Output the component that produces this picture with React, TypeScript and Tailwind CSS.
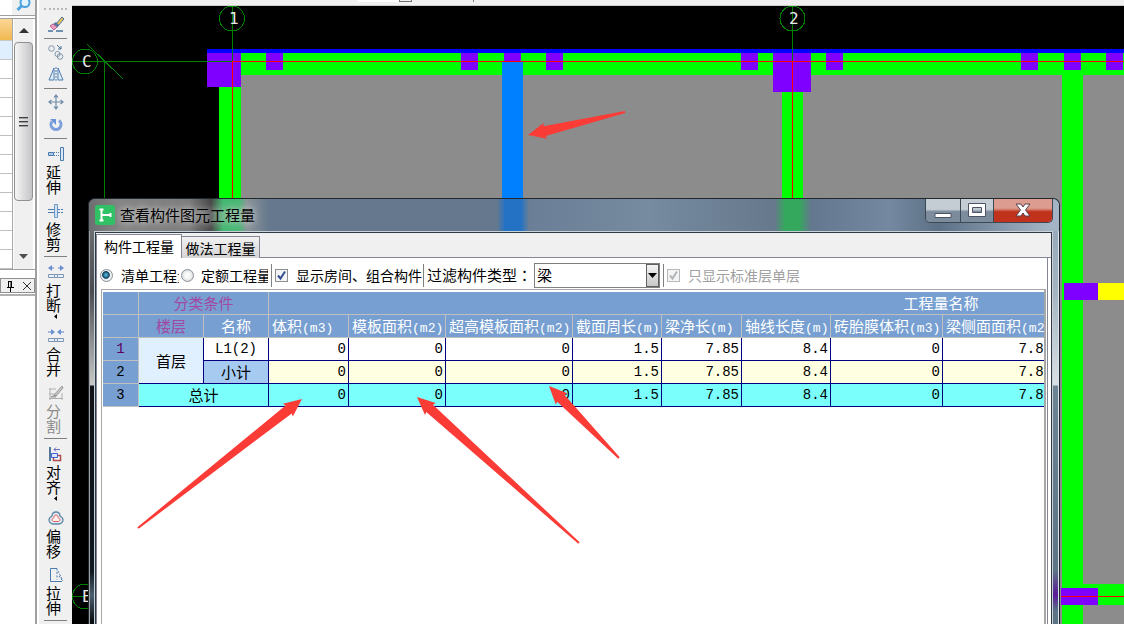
import type { ReactNode } from 'react';
import { clsx } from 'clsx';

interface ToolItem {
  label: string;
  icon: ReactNode;
  hasMenu?: boolean;
  disabled?: boolean;
}

interface Column {
  name: string;
  unit: string;
}

const columns: Column[] = [
  { name: '体积', unit: '(m3)' },
  { name: '模板面积', unit: '(m2)' },
  { name: '超高模板面积', unit: '(m2)' },
  { name: '截面周长', unit: '(m)' },
  { name: '梁净长', unit: '(m)' },
  { name: '轴线长度', unit: '(m)' },
  { name: '砖胎膜体积', unit: '(m3)' },
  { name: '梁侧面面积', unit: '(m2)' },
];

const quantities = ['0', '0', '0', '1.5', '7.85', '8.4', '0', '7.85'];

function Icon({ children }: { children: ReactNode }) {
  return (
    <svg className="block size-4 shrink-0" viewBox="0 0 16 16" fill="none" aria-hidden="true">
      {children}
    </svg>
  );
}

const eraserIcon = (
  <Icon>
    <path d="M8 8 14 1l2 2-6 7z" fill="#f0c060" stroke="#4a7090" />
    <path d="m5 8 3-2 3 3-2 3z" fill="#4f789c" />
    <path d="m2 10 3-2 4 3-3 3z" fill="#f0a0c0" stroke="#b06090" />
    <path d="M0 15h5M8 15h7" stroke="#44749a" strokeWidth="1.5" />
  </Icon>
);

const copyIcon = (
  <Icon>
    <circle cx="3.5" cy="4.5" r="2.8" stroke="#7f96ab" />
    <path d="m9 1 4 4m0-3v3h-3" stroke="#44749a" />
    <circle cx="9.5" cy="10" r="2.6" stroke="#7f96ab" />
    <circle cx="12" cy="12.5" r="2.8" stroke="#7f96ab" />
  </Icon>
);

const mirrorIcon = (
  <Icon>
    <path d="M6 2v12H1zM10 2v12h5z" fill="#e4eefa" stroke="#4b7cae" />
    <path d="M8 1v14" stroke="#4b7cae" strokeDasharray="2 1" />
  </Icon>
);

const moveIcon = (
  <Icon>
    <path
      d="M8 2v12M2 8h12M6 3.5 8 1l2 2.5M6 12.5 8 15l2-2.5M3.5 6 1 8l2.5 2M12.5 6 15 8l-2.5 2"
      stroke="#6f8ca8"
      strokeWidth="1.2"
    />
  </Icon>
);

const rotateIcon = (
  <Icon>
    <path d="M11 4.5A5 5 0 1 1 4 5.5" stroke="#7c9fdc" strokeWidth="3" />
    <path d="M2 3h6v6z" fill="#6a94d8" />
  </Icon>
);

const extendIcon = (
  <Icon>
    <path d="M.5 6.5h5v3h-5z" fill="#a9c8ea" stroke="#4b7cae" />
    <path d="M6 6.5h5M6 9.5h5" stroke="#4b7cae" strokeDasharray="1 1" />
    <path d="M12.5 1.5h3v13h-3z" fill="#dce8f5" stroke="#4b7cae" />
  </Icon>
);

const trimIcon = (
  <Icon>
    <path d="M0 6.5h6M0 9.5h6" stroke="#4b7cae" />
    <path d="M10 6.5h6M10 9.5h6" stroke="#4b7cae" strokeDasharray="2 1" />
    <path d="M6.5 1.5h3v13h-3z" fill="#cfe0f2" stroke="#6c9ac8" />
  </Icon>
);

const breakIcon = (
  <Icon>
    <path d="M1 4h5M10 4h5" stroke="#5a82cc" />
    <path d="M4 1 0 4l4 3zM12 1l4 3-4 3z" fill="#6a90d4" />
    <path d="M.5 10.5h6v3h-6zM9.5 10.5h6v3h-6zM6.5 10.5h3v3h-3z" fill="#e8f0f8" stroke="#7f96b8" />
  </Icon>
);

const mergeIcon = (
  <Icon>
    <path d="M0 4h4M12 4h4" stroke="#5a82cc" />
    <path d="m3 1 4 3-4 3zM13 1 9 4l4 3z" fill="#6a90d4" />
    <path d="M.5 10.5h15v3H.5zM6.5 10.5v3M9.5 10.5v3" fill="#e8f0f8" stroke="#7f96b8" />
  </Icon>
);

const splitIcon = (
  <Icon>
    <path d="M1 4h7M1 13.5h14M2 3v12M14 8v7M1 9h5" stroke="#b0b0b0" />
    <path d="m6 10 8-9 1 2-7 8zM3 12l4-2 1 2z" fill="#c8c8c8" stroke="#989898" />
  </Icon>
);

const alignIcon = (
  <Icon>
    <path d="M2 1v14" stroke="#4f789c" strokeWidth="2" />
    <path d="M6 3.5h6M8 1.5l-2 2 2 2" stroke="#6a6cc0" />
    <path d="M5.5 9.5h7v5h-7z" fill="#fff" stroke="#b04848" strokeWidth="1.5" />
    <path d="M3.5 7.5h6v4h-6z" fill="#dce8ff" stroke="#3c64d8" />
  </Icon>
);

const offsetIcon = (
  <Icon>
    <path d="M8 2c3 0 4 2 4 4 2 1 3 2 3 4s-2 4-4 4H5c-2 0-4-2-4-4s1-3 3-4c0-2 1-4 4-4z" fill="#e0e8f0" stroke="#5f88a4" strokeWidth="1.3" />
    <path d="M8 5c1.5 0 2 1 2 2.5 1 .5 2 1 2 2s-1 2-2 2H6c-1 0-2-1-2-2s1-1.5 2-2C6 6 6.5 5 8 5z" fill="#fbeeee" stroke="#e06060" />
  </Icon>
);

const stretchIcon = (
  <Icon>
    <path d="M9 1.5H2.5v13H14" stroke="#4b7cae" />
    <path d="M9 1.5v11M10 4l5 10M11 9l3 4" stroke="#4b7cae" strokeDasharray="2 1.5" />
  </Icon>
);

const iconGroups = [
  [
    { label: '复制', icon: copyIcon },
    { label: '镜像', icon: mirrorIcon },
  ],
  [
    { label: '移动', icon: moveIcon },
    { label: '旋转', icon: rotateIcon },
  ],
];

const toolGroups: ToolItem[][] = [
  [
    { label: '延伸', icon: extendIcon },
    { label: '修剪', icon: trimIcon },
  ],
  [
    { label: '打断', icon: breakIcon, hasMenu: true },
    { label: '合并', icon: mergeIcon },
    { label: '分割', icon: splitIcon, disabled: true },
  ],
  [
    { label: '对齐', icon: alignIcon, hasMenu: true },
    { label: '偏移', icon: offsetIcon },
    { label: '拉伸', icon: stretchIcon },
  ],
];

function ToolButton({ label, icon, hasMenu, disabled }: ToolItem) {
  return (
    <button
      type="button"
      disabled={disabled}
      className={clsx('flex flex-col items-center', disabled ? 'text-[#8a8a8a]' : 'text-black')}
    >
      {icon}
      <span className="mt-0.5 mr-1 mb-px w-4 text-[15px] leading-[15px] break-all">{label}</span>
      {hasMenu && (
        <svg className="block h-[7px] w-2" viewBox="0 0 8 7" aria-hidden="true">
          <path d="M5 1v5L2 3.5z" fill="#000" />
        </svg>
      )}
    </button>
  );
}

function ModifyToolbar() {
  return (
    <nav className="flex w-[35px] shrink-0 flex-col border-l-2 border-white bg-[#f0f0f0] px-[5px]">
      <div className="mt-2 mb-1.5 h-0.5 shrink-0 border-t-2 border-dotted border-[#b8b8b8]" />
      <div className="flex justify-center pb-1.5">
        <button type="button" aria-label="删除">{eraserIcon}</button>
      </div>
      {iconGroups.map((group) => (
        <div key={group[0].label} className="flex flex-col items-center gap-1.5 border-t border-[#808080] pt-[5px] pb-1.5">
          {group.map((tool) => (
            <button key={tool.label} type="button" aria-label={tool.label}>{tool.icon}</button>
          ))}
        </div>
      ))}
      {toolGroups.map((group) => (
        <div key={group[0].label} className="flex flex-col items-center gap-2 border-t border-[#808080] pt-[7px] pb-1">
          {group.map((tool) => (
            <ToolButton key={tool.label} {...tool} />
          ))}
        </div>
      ))}
      <div className="border-t border-[#808080]" />
    </nav>
  );
}

function LeftPanel() {
  return (
    <aside className="flex w-[37px] shrink-0 flex-col border-r-2 border-[#a0a0a0] bg-white">
      <div className="flex h-4 shrink-0 items-start justify-between border-b border-[#a0a0a0] bg-[#f0f0f0]">
        <div className="h-full w-3 bg-white" />
        <svg className="block h-3 w-5" viewBox="0 0 20 12" fill="none" aria-hidden="true">
          <circle cx="10" cy="2.5" r="4.5" fill="#e4f4ff" stroke="#4aa3e0" strokeWidth="2" />
          <path d="m6.5 6-4 4" stroke="#4aa3e0" strokeWidth="3" />
        </svg>
      </div>
      <div className="mt-0.5 flex h-[252px] shrink-0 overflow-hidden border-y border-[#a0a0a0]">
        <div className="w-[13px] shrink-0 border-r border-[#a8a8a8]">
          <div className="h-[22px] border-b border-[#c8c8c8] bg-linear-to-b from-[#fbd795] to-[#f0b850]" />
          <div className="h-[19px] border-b border-[#c8c8c8] bg-[#dfeffe]" />
          {Array.from({ length: 11 }, (_, i) => (
            <div key={i} className="h-[19px] border-b border-[#c0c0c0]" />
          ))}
        </div>
        <div className="ml-px flex w-[19px] flex-col items-center bg-[#f0f0f0]">
          <svg className="h-[23px] w-3 shrink-0" viewBox="0 0 12 23" aria-hidden="true">
            <path d="m6 9 5 5H1z" fill="#303030" />
          </svg>
          <div className="flex h-[159px] w-[19px] shrink-0 flex-col items-center justify-center gap-0.5 rounded-sm border border-[#909090] bg-linear-to-r from-[#f6f6f6] to-[#c4c4c8]">
            <div className="h-0.5 w-[9px] border-t border-[#404040] bg-[#a0a0a0]" />
            <div className="h-0.5 w-[9px] border-t border-[#404040] bg-[#a0a0a0]" />
            <div className="h-0.5 w-[9px] border-t border-[#404040] bg-[#a0a0a0]" />
          </div>
          <svg className="mt-auto mb-1.5 h-3 w-3 shrink-0" viewBox="0 0 12 12" aria-hidden="true">
            <path d="M1 3h9L5.5 8z" fill="#505050" />
          </svg>
        </div>
      </div>
      <div className="mt-2 flex h-[15px] shrink-0 items-center justify-end gap-2 border border-[#909090] bg-[#f0f0f0] pr-0.5">
        <button type="button" aria-label="固定">
          <svg className="block h-3 w-2" viewBox="0 0 8 12" fill="none" aria-hidden="true">
            <path d="M2 1.5h4M2.5 1v6M5.5 1v6M5 1v6M1 7.5h7M4.5 8v4" stroke="#000" />
          </svg>
        </button>
        <button type="button" aria-label="关闭面板">
          <svg className="block h-3 w-2.5" viewBox="0 0 10 12" fill="none" aria-hidden="true">
            <path d="m1 2 8 8M9 2l-8 8" stroke="#303030" />
          </svg>
        </button>
      </div>
      <div className="mt-px flex-1 border-t-2 border-[#b0b0b0]" />
    </aside>
  );
}

const studs = [266, 461, 546, 741, 826, 1021, 1064, 1106];

// Plan view of the floor: slabs, beams, columns and axis grid
function PlanDrawing() {
  return (
    <svg className="absolute inset-0 size-full" aria-hidden="true">
      <g transform="translate(-72 -6)" shapeRendering="crispEdges">
        <rect x="241" y="75" width="1600" height="1200" fill="#8c8c8c" />
        <rect x="219" y="87" width="22" height="1200" fill="#00ff00" />
        <rect x="241" y="53" width="1600" height="22" fill="#00ff00" />
        <rect x="782" y="75" width="21" height="1200" fill="#00ff00" />
        <rect x="1062" y="75" width="21" height="1200" fill="#00ff00" />
        <rect x="1083" y="584" width="800" height="21" fill="#00ff00" />
        <rect x="207" y="49" width="1600" height="4" fill="#0000ff" />
        <rect x="207" y="53" width="34" height="34" fill="#8000ff" />
        <rect x="773" y="53" width="38" height="39" fill="#8000ff" />
        <rect x="504" y="53" width="17" height="9" fill="#8000ff" />
        {studs.map((x) => (
          <rect key={x} x={x} y="53" width="17" height="17" fill="#8000ff" />
        ))}
        <rect x="502" y="62" width="21" height="400" fill="#0080ff" />
        <rect x="1064" y="283" width="34" height="17" fill="#8000ff" />
        <rect x="1098" y="283" width="400" height="17" fill="#ffff00" />
        <rect x="1061" y="588" width="37" height="17" fill="#8000ff" />
        <path d="M232 61.5h1400M232.5 61v400M792.5 61v400M1061 596.5h600" stroke="#ff0000" fill="none" />
        <path
          d="M72 61.5h160M232.5 6v55M792.5 6v55M104.5 61v400M87 44l36 35M72 596.5h12"
          stroke="#008000"
          fill="none"
        />
        <g stroke="#008000" fill="none">
          <circle cx="232" cy="18.5" r="12.5" />
          <circle cx="792.5" cy="18.5" r="12.5" />
          <circle cx="85" cy="61.5" r="12.5" />
          <circle cx="85" cy="596.5" r="12.5" />
        </g>
      </g>
      <g transform="translate(-72 -6)" className="fill-[#e8e8e8] font-['DejaVu_Sans_Mono',monospace] text-base">
        <text x="229" y="24">1</text>
        <text x="789" y="24">2</text>
        <text x="82" y="67">C</text>
        <text x="82" y="602">E</text>
      </g>
    </svg>
  );
}

const arrows = [
  { tip: [528, 135], tail: [625, 112] },
  { tip: [302, 399], tail: [138, 528] },
  { tip: [417, 397], tail: [579, 543] },
  { tip: [549, 386], tail: [619, 458] },
];

function Arrow({ tip, tail }: { tip: number[]; tail: number[] }) {
  const dx = tail[0] - tip[0];
  const dy = tail[1] - tip[1];
  const len = Math.hypot(dx, dy);
  const at = (along: number, side: number) =>
    `${tip[0] + (dx * along - dy * side) / len},${tip[1] + (dy * along + dx * side) / len}`;

  return (
    <polygon points={[at(0, 0), at(18, 8), at(17, 5), at(len, 1), at(len, -1), at(17, -5), at(18, -8)].join(' ')} />
  );
}

function Annotations() {
  return (
    <svg className="pointer-events-none absolute inset-0 size-full" aria-hidden="true">
      <g transform="translate(-72 -6)" fill="#fb3b36">
        {arrows.map((arrow) => (
          <Arrow key={arrow.tip[0]} {...arrow} />
        ))}
      </g>
    </svg>
  );
}

function TitleBar() {
  return (
    <header className="flex h-8 shrink-0 items-start justify-between bg-[linear-gradient(90deg,#6c6e6f_0,#858585_30px,#7c7c7c_100px,#484848_122px,#44b870_134px,#48b874_150px,#8a9498_158px,#66788e_180px,#66788e_408px,#2472c4_416px,#2472c4_432px,#6a7f95_440px,#768ba0_560px,#66788c_686px,#34a85c_696px,#34a85c_710px,#63778e_722px,#74899f_800px,#5c7086_850px,#a3b4c4_960px)] pl-1.5">
      <div className="flex items-center gap-[5px] pt-1.5">
        <svg className="block size-5 shrink-0" viewBox="0 0 20 20" fill="none" aria-hidden="true">
          <rect width="20" height="20" rx="3" fill="#2fc163" />
          <path d="M4.5 4.5h4M6.5 4.5v11M4.5 15.5h4M6.5 10h9M15.5 8v4" stroke="#fff" strokeWidth="2" />
        </svg>
        <h1 className="text-[15px] leading-5 whitespace-nowrap text-black [text-shadow:0_0_8px_#c8c8c8,0_0_6px_#c8c8c8]">
          查看构件图元工程量
        </h1>
      </div>
      <div className="mr-1.5 flex h-6 shrink-0 overflow-hidden rounded-b-[5px] border border-t-0 border-[#3c4854]">
        <button
          type="button"
          aria-label="最小化"
          className="flex w-[35px] items-center justify-center border-r border-[#3c4854] bg-linear-to-b from-[#c4ccd4] from-45% to-[#7c8c9c] to-55%"
        >
          <svg className="block h-5 w-5" viewBox="0 0 20 20" aria-hidden="true">
            <path d="M2 12.5h16v4H2z" fill="#fff" stroke="#4c5464" />
          </svg>
        </button>
        <button
          type="button"
          aria-label="最大化"
          className="flex w-[33px] items-center justify-center border-r border-[#3c4854] bg-linear-to-b from-[#c4ccd4] from-45% to-[#7c8c9c] to-55%"
        >
          <svg className="block h-5 w-5" viewBox="0 0 20 20" aria-hidden="true">
            <path d="M1.5 2.5h17v13h-17zM5.5 6.5v5h9v-5z" fill="#fff" stroke="#4c5464" fillRule="evenodd" />
          </svg>
        </button>
        <button
          type="button"
          aria-label="关闭"
          className="flex w-[58px] items-center justify-center bg-linear-to-b from-[#dc9c90] from-40% to-[#c0321c] to-55%"
        >
          <svg className="block h-5 w-5" viewBox="0 0 20 20" aria-hidden="true">
            <path d="M3 3h5l2 3 2-3h5l-4.5 6 4.5 6h-5l-2-3-2 3H3l4.5-6z" fill="#fff" stroke="#54404c" />
          </svg>
        </button>
      </div>
    </header>
  );
}

function Separator() {
  return <div className="h-[23px] w-px shrink-0 bg-[#808080]" />;
}

const radioClass =
  'size-[13px] shrink-0 appearance-none rounded-full border border-[#8a8f94] bg-[radial-gradient(circle,#fafafa_30%,#c8ccd0_100%)] checked:bg-[radial-gradient(circle_at_45%_45%,#58c8f0_0,#10405c_40%,#e8eef2_50%)]';

function CheckMark({ id, disabled }: { id: string; disabled?: boolean }) {
  return (
    <span className="relative flex size-[13px] shrink-0">
      <input
        id={id}
        type="checkbox"
        defaultChecked
        disabled={disabled}
        className="size-[13px] appearance-none border border-[#8e8f8f] bg-[#f2f4f6] disabled:border-[#b8b8b8]"
      />
      <svg className="pointer-events-none absolute inset-0 size-[13px]" viewBox="0 0 13 13" fill="none" aria-hidden="true">
        <path d="m3 6.5 2.5 3L10 2.5" stroke={disabled ? '#b4b4b4' : '#344f90'} strokeWidth="2" />
      </svg>
    </span>
  );
}

function FilterBar() {
  return (
    <div className="flex h-[31px] shrink-0 items-center pt-[3px] text-sm whitespace-nowrap text-black">
      <input id="list-qty" name="qty" type="radio" defaultChecked className={clsx(radioClass, 'ml-[3px]')} />
      <label htmlFor="list-qty" className="ml-2 w-[58px] shrink-0 overflow-hidden">清单工程量</label>
      <input id="quota-qty" name="qty" type="radio" className={clsx(radioClass, 'ml-0.5')} />
      <label htmlFor="quota-qty" className="mr-[3px] ml-[7px] w-[67px] shrink-0 overflow-hidden">定额工程量</label>
      <Separator />
      <div className="mr-px ml-[3px] flex shrink-0 items-center gap-2">
        <CheckMark id="show-rooms" />
        <label htmlFor="show-rooms" className="w-[126px]">显示房间、组合构件</label>
      </div>
      <Separator />
      <label htmlFor="member-type" className="ml-[3px] w-[107px] shrink-0 text-[15px]">
        过滤构件类型<span className="font-['Noto_Sans_CJK_TC',sans-serif]" lang="zh-Hant">：</span>
      </label>
      <div className="relative mr-[3px] flex h-[25px] w-[126px] shrink-0 border border-[#808080]">
        <select id="member-type" defaultValue="梁" className="w-full appearance-none bg-white pl-0.5 text-[15px] leading-5">
          <option>梁</option>
          <option>柱</option>
          <option>板</option>
        </select>
        <svg
          className="pointer-events-none absolute inset-y-0 right-0 h-full w-[13px] border border-[#606060] bg-linear-to-b from-[#f4f4f4] to-[#c8c8c8]"
          viewBox="0 0 11 21"
          aria-hidden="true"
        >
          <path d="M1 8h9l-4.5 5z" fill="#000" />
        </svg>
      </div>
      <Separator />
      <div className="ml-[3px] flex shrink-0 items-center gap-2 text-[#a0a0a0]">
        <CheckMark id="standard-only" disabled />
        <label htmlFor="standard-only">只显示标准层单层</label>
      </div>
    </div>
  );
}

const monoFont = "font-['Liberation_Mono','Noto_Sans_CJK_SC',monospace]";
const headCell = 'h-[23px] border-r border-b border-[#c0c0c0] bg-[#779fd1] font-normal overflow-hidden';
const bodyCell = 'h-[23px] border-r border-b border-[#000080] overflow-hidden';

function QuantityCells({ className }: { className: string }) {
  return (
    <>
      {quantities.map((value, i) => (
        <td key={columns[i].name} className={clsx(bodyCell, monoFont, 'pr-0.5 text-right text-sm leading-[22px]', className)}>
          {value}
        </td>
      ))}
      <td className={clsx(bodyCell, className)} />
    </>
  );
}

function QuantityTable() {
  return (
    <table className="w-[1511px] table-fixed border-separate border-spacing-0 text-[15px] leading-[22px] whitespace-nowrap text-black">
      <colgroup>
        <col className="w-9" />
        <col className="w-[65px]" />
        <col className="w-[65px]" />
        <col className="w-20" />
        <col className="w-[97px]" />
        <col className="w-[127px]" />
        <col className="w-[89px]" />
        <col className="w-20" />
        <col className="w-[89px]" />
        <col className="w-28" />
        <col className="w-28" />
        <col />
      </colgroup>
      <thead className="text-white">
        <tr>
          <th className={headCell} />
          <th colSpan={2} className={clsx(headCell, 'text-[#a349a4]')}>分类条件</th>
          <th colSpan={9} className={headCell}>工程量名称</th>
        </tr>
        <tr>
          <th className={headCell} />
          <th className={clsx(headCell, 'text-[#a349a4]')}>楼层</th>
          <th className={headCell}>名称</th>
          {columns.map((column) => (
            <th key={column.name} className={clsx(headCell, 'pl-[3px] text-left')}>
              {column.name}
              <span className={clsx(monoFont, 'text-[13px] leading-none')}>{column.unit}</span>
            </th>
          ))}
          <th className={headCell} />
        </tr>
      </thead>
      <tbody>
        <tr>
          <th className={clsx(headCell, monoFont, 'text-sm leading-[22px] text-[#5a0060]')}>1</th>
          <td rowSpan={2} className={clsx(bodyCell, 'bg-[#e0f0ff] text-center')}>首层</td>
          <td className={clsx(bodyCell, monoFont, 'bg-white text-center text-sm leading-[22px]')}>L1(2)</td>
          <QuantityCells className="bg-white" />
        </tr>
        <tr>
          <th className={clsx(headCell, monoFont, 'text-sm leading-[22px]')}>2</th>
          <td className={clsx(bodyCell, 'bg-[#a6caf0] text-center')}>小计</td>
          <QuantityCells className="bg-[#ffffe1]" />
        </tr>
        <tr>
          <th className={clsx(headCell, monoFont, 'text-sm leading-[22px]')}>3</th>
          <td colSpan={2} className={clsx(bodyCell, 'bg-[#7bfffd] text-center')}>总计</td>
          <QuantityCells className="bg-[#7bfffd]" />
        </tr>
      </tbody>
    </table>
  );
}

function QuantityDialog() {
  return (
    <section className="absolute top-48 right-16 bottom-0 left-4 flex flex-col overflow-hidden rounded-t-[7px] border border-b-0 border-[#20282e] bg-[#66788e]">
      <TitleBar />
      <div className="flex min-h-0 flex-1">
        <div className="w-[5px] shrink-0 border-l border-[#9aa0a4] bg-[linear-gradient(180deg,#6a6c6e_0,#484c50_60px,#c8c8c8_154px,#101418_155px,#101820_340px,#4c6070_364px,#0c1014_390px)]" />
        <div className="flex min-w-0 flex-1 flex-col border border-b-0 border-[#c8d0d8]">
          <div className="flex min-w-0 flex-1 flex-col border border-b-0 border-[#303a44] bg-[#f0f0f0] pt-px">
            <div role="tablist" className="flex h-6 shrink-0 items-end text-sm text-black">
              <button
                type="button"
                role="tab"
                aria-selected="true"
                className="h-6 w-[86px] border border-b-0 border-[#848894] bg-white pb-0.5 whitespace-nowrap"
              >
                构件工程量
              </button>
              <button
                type="button"
                role="tab"
                aria-selected="false"
                className="h-[22px] w-[78px] border border-b-0 border-l-0 border-[#848894] bg-linear-to-b from-[#f2f2f2] to-[#d4d4d4] whitespace-nowrap"
              >
                做法工程量
              </button>
              <div className="flex-1 self-end border-b border-[#848894]" />
            </div>
            <div className="flex min-h-0 flex-1 bg-white pr-[3px]">
              <div className="flex min-w-0 flex-1 flex-col border-x border-[#848894] bg-white">
                <FilterBar />
                <div className="mr-px ml-1 min-h-0 flex-1 overflow-hidden border-t border-r-2 border-l border-[#a8a8a8] pt-0.5 pl-px">
                  <QuantityTable />
                </div>
              </div>
            </div>
          </div>
        </div>
        <div className="w-1.5 shrink-0 border-r border-[#d8e4ec] bg-[linear-gradient(180deg,#98aabb_0,#a4b4c0_60px,#d8e0e4_154px,#6c8494_155px,#5c7486_340px,#5a1a98_364px,#5c7486_380px)]" />
      </div>
    </section>
  );
}

export default function App() {
  return (
    <div className="flex h-screen overflow-hidden bg-[#f0f0f0] font-['Noto_Sans_CJK_SC',sans-serif]">
      <LeftPanel />
      <ModifyToolbar />
      <div className="flex min-w-0 flex-1 flex-col">
        <div className="flex h-1.5 shrink-0 items-start border-b border-[#c8d0c8] pl-[286px]">
          <div className="h-0.5 w-[41px] bg-white" />
          <div className="h-0.5 w-[13px] border border-t-0 border-[#707070]" />
          <div className="ml-[61px] h-0.5 w-px bg-[#808080]" />
        </div>
        <main className="relative flex-1 overflow-hidden bg-black">
          <PlanDrawing />
          <QuantityDialog />
          <Annotations />
        </main>
      </div>
    </div>
  );
}
